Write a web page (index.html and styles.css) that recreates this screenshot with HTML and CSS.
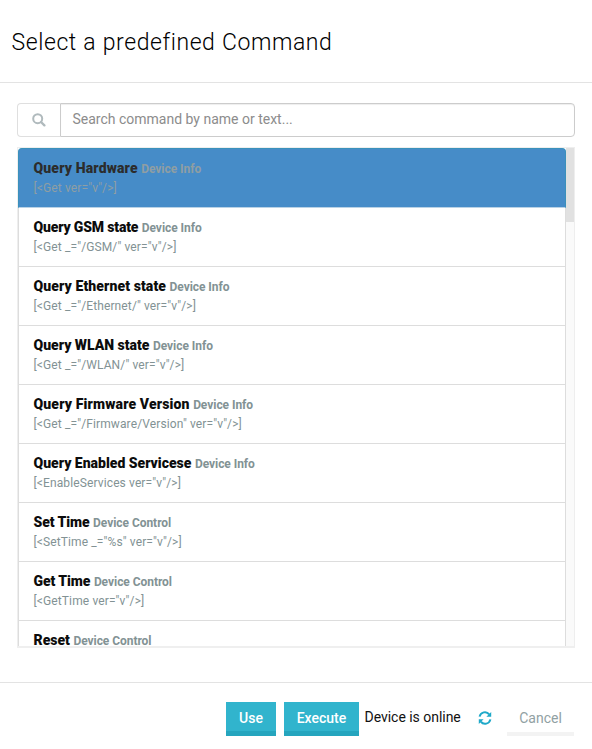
FILE: index.html
```html
<!DOCTYPE html>
<html lang="en">
<head>
<meta charset="utf-8">
<title>Select a predefined Command</title>
<link rel="stylesheet" href="styles.css">
</head>
<body>
<div class="modal">
  <header class="modal-header"><h1>Select a predefined Command</h1></header>
  <main class="modal-body">
    <div class="search">
      <span class="search-addon">
        <svg width="14" height="14" viewBox="0 0 14 14"><circle cx="5.7" cy="5.7" r="4.5" fill="none" stroke="#b0babd" stroke-width="2"/><path d="M9 9l3.4 3.4" stroke="#b0babd" stroke-width="2.3" stroke-linecap="round"/></svg>
      </span>
      <div class="search-input"><span>Search command by name or text...</span></div>
    </div>
    <div class="list-box">
      <ul class="list">
        <li class="item active"><h2><b class="wide">Query Hardware</b> <small>Device Info</small></h2><p>[&lt;Get ver="v"/&gt;]</p></li>
        <li class="item"><h2><b class="tight">Query GSM state</b> <small>Device Info</small></h2><p>[&lt;Get _="/GSM/" ver="v"/&gt;]</p></li>
        <li class="item"><h2><b class="loose">Query Ethernet state</b> <small>Device Info</small></h2><p>[&lt;Get _="/Ethernet/" ver="v"/&gt;]</p></li>
        <li class="item"><h2><b>Query WLAN state</b> <small>Device Info</small></h2><p>[&lt;Get _="/WLAN/" ver="v"/&gt;]</p></li>
        <li class="item"><h2><b class="wide">Query Firmware Version</b> <small>Device Info</small></h2><p>[&lt;Get _="/Firmware/Version" ver="v"/&gt;]</p></li>
        <li class="item"><h2><b>Query Enabled Servicese</b> <small>Device Info</small></h2><p>[&lt;EnableServices ver="v"/&gt;]</p></li>
        <li class="item"><h2><b class="snug">Set Time</b> <small>Device Control</small></h2><p>[&lt;SetTime _="%s" ver="v"/&gt;]</p></li>
        <li class="item"><h2><b class="snug">Get Time</b> <small>Device Control</small></h2><p>[&lt;GetTime ver="v"/&gt;]</p></li>
        <li class="item"><h2><b>Reset</b> <small>Device Control</small></h2></li>
      </ul>
      <div class="track"><div class="thumb"></div></div>
    </div>
  </main>
  <footer class="modal-footer">
    <div class="btn use"><span>Use</span></div>
    <div class="btn execute"><span>Execute</span></div>
    <span class="status">Device is online</span>
    <svg class="refresh" width="14" height="14" viewBox="0 0 14 14"><path d="M1.6 5.6A5.4 5.4 0 0 1 11.2 3.4M12.4 8.4A5.4 5.4 0 0 1 2.8 10.6" fill="none" stroke="#1fa9c9" stroke-width="2"/><path d="M13.2 1v4.8H8.4zM.8 13V8.2h4.8z" fill="#1fa9c9"/></svg>
    <div class="btn cancel"><span>Cancel</span></div>
  </footer>
</div>
</body>
</html>
```
FILE: styles.css
```css
* { box-sizing: border-box; }
body { margin: 0; background: #fff; color: #111; font-family: Roboto, "Liberation Sans", sans-serif; }
h1, h2, p, ul { margin: 0; padding: 0; }
.modal { width: 592px; height: 749px; overflow: hidden; display: flex; flex-direction: column; }
.modal-header { height: 83px; padding-left: 11.5px; border-bottom: 1px solid #e3e3e3; }
h1 { font-size: 23px; font-weight: 300; line-height: 28px; padding-top: 29px; letter-spacing: .58px; word-spacing: .3px; white-space: nowrap; color: #000; }
.modal-body { height: 599px; padding: 20px 17px 0; }
.search { display: flex; height: 34px; }
.search-addon { width: 43px; border: 1px solid #dfdfdf; border-right: 0; border-radius: 4px 0 0 4px; display: flex; align-items: center; justify-content: center; padding: 0 1px 1px 0; }
.search-input { flex: 1; border: 1px solid #ccc; border-radius: 0 4px 4px 0; padding-left: 11.5px; font-size: 14px; line-height: 31px; color: #8c8c8c; box-shadow: inset 0 1px 1px rgba(0,0,0,.07); }
.list-box { margin-top: 10px; height: 501px; display: flex; border: 1px solid #eee; border-bottom: 2px solid #efefef; overflow: hidden; }
.list { list-style: none; width: 548px; }
.item { height: 59px; padding: 10px 0 0 14.5px; border: 1px solid #ddd; border-top: 0; white-space: nowrap; }
.item.active { height: 60px; background: #468cc8; border: 1px solid #3b91bb; border-bottom-color: #b9d2e6; border-radius: 4px 4px 0 0; }
h2 { font-size: 14px; line-height: 18px; font-weight: 700; display: flex; align-items: baseline; gap: 3.5px; }
h2 b { color: #0c0c0c; }
h2 small { font-size: 12px; letter-spacing: -.05px; color: #829294; }
.wide { letter-spacing: .15px; }
.loose { letter-spacing: .1px; }
.snug { letter-spacing: -.07px; }
.tight { letter-spacing: -.17px; }
p { font-size: 12px; line-height: 18px; margin-top: 1px; letter-spacing: .12px; color: #829294; }
.active b { color: #2c2c2c; }
.active small, .active p { color: #8f9ea3; }
.track { flex: 1; background: #fafafa; }
.thumb { height: 74px; background: #e1e1e1; }
.modal-footer { height: 67px; border-top: 1px solid #e3e3e3; padding: 19px 17px 0 226px; display: flex; font-size: 14px; }
.btn { height: 34px; display: flex; justify-content: center; line-height: 32px; font-weight: 500; color: #fff; background: #31b4cd; border-bottom: 5px solid #25a5be; }
.use { width: 50px; }
.execute { width: 75px; margin-left: 8px; }
.status { width: 121px; padding-left: 5.5px; line-height: 31px; letter-spacing: -.03px; white-space: nowrap; }
.refresh { margin: 9px 0 0 -2px; }
.cancel { width: 67px; margin-left: 15px; color: #91a1a3; background: #fff; border-bottom: 4px solid #f3f3f3; font-weight: 400; }
```
